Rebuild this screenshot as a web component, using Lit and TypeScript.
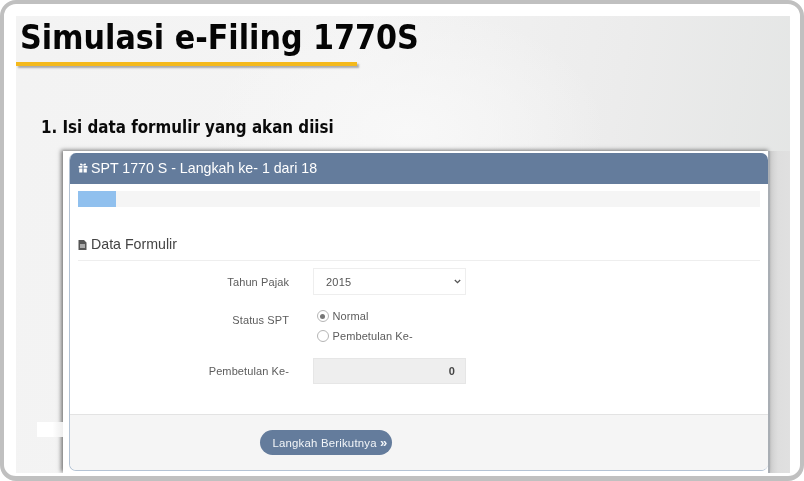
import { LitElement, html, css } from "lit";
import { customElement } from "lit/decorators.js";

@customElement("app-root")
export class AppRoot extends LitElement {
  static styles = css`
    :host { display: block; width: 804px; height: 481px; background: #fff; overflow: hidden; font-family: "Liberation Sans", Arial, sans-serif; }
    * { box-sizing: border-box; }
    .frame { height: 481px; width: 804px; border: 4px solid #c0c0c0; border-bottom-width: 5px; border-radius: 16px; padding: 12px 10px 3px 12px; background: #fff; }
    .slide { position: relative; height: 457px; overflow: hidden;
      background:
        radial-gradient(ellipse 200px 125px at 390px 115px, #f8f8f8 0%, rgba(248,248,248,0) 100%),
        linear-gradient(100deg, #f3f3f3 0%, #f4f4f4 40%, #ececec 72%, #e2e4e3 100%); }
    h1 { margin: 0; padding: 2px 0 0 4px; height: 46px; font: 700 33.6px/40px "DejaVu Sans", sans-serif; font-stretch: condensed; color: #050505; white-space: nowrap; filter: blur(.3px); }
    .rule { width: 341px; height: 4px; background: #f4b91c; box-shadow: 2px 2px 2px rgba(0,0,0,.3); }
    h2 { margin: 50px 0 0 25px; font: 700 16.8px/22px "DejaVu Sans", sans-serif; font-stretch: condensed; color: #0a0a0a; height: 22px; filter: blur(.3px); }
    .stage { margin: 13px 0 0 47px; height: 322px; display: flex; }
    .window { flex: none; width: 707px; height: 322px; padding: 2px 0 0 6px; background: #fff; border-right: 2px solid #a9aeb4; position: relative; box-shadow: -2px -1px 4px rgba(0,0,0,.5); }
    .band { flex: 1; background: linear-gradient(90deg, #cfcfcf, #dedede 40%, #e0e0e0); }
    .panel { width: 699px; height: 318px; background: #fff; border: 1px solid #b4c3d4; border-top: 0; border-right: 0; border-radius: 7px; overflow: hidden; display: flex; flex-direction: column; filter: blur(.3px); }
    .head { height: 31px; background: #647c9c; color: #fff; font-size: 14.2px; display: flex; align-items: center; gap: 3px; padding: 0 0 2px 8px; flex: none; }
    .body { flex: 1; padding: 7px 8px 0 8px; }
    .track { height: 16px; width: 682px; background: #f5f5f5; }
    .fill { height: 100%; width: 38px; background: #90c0ee; }
    .section { margin-top: 28px; height: 26px; padding-top: 1px; border-bottom: 1px solid #eee; color: #444; font-size: 14.2px; display: flex; align-items: flex-start; gap: 4px; line-height: 16px; }
    .section svg { margin-top: 4px; }
    .row { display: grid; grid-template-columns: 211px 153px; column-gap: 24px; align-items: center; color: #5c5c5c; font-size: 11px; letter-spacing: .1px; }
    .row label { text-align: right; }
    .r1 { margin-top: 7px; height: 27px; }
    .r2 { margin-top: 11px; height: 40px; align-items: start; }
    .r2 label { padding-top: 8px; }
    .r3 { margin-top: 12px; height: 26px; }
    .pick { position: relative; height: 27px; }
    select { appearance: none; display: block; width: 153px; height: 27px; border: 1px solid #eee; background: #fff; color: #555; font: 11px "Liberation Sans", sans-serif; letter-spacing: .25px; padding: 0 12px; outline: none; }
    .chev { position: absolute; right: 5px; top: 11px; }
    .radios { display: flex; flex-direction: column; gap: 8px; padding: 4px 0 0 3.500px; }
    .radio { display: flex; align-items: center; gap: 4px; height: 12px; }
    .dot { width: 12px; height: 12px; border-radius: 50%; border: 1px solid #b5b5b5; background: #fff; display: flex; align-items: center; justify-content: center; }
    .dot.on::after { content: ""; width: 5px; height: 5px; border-radius: 50%; background: #777; }
    .num { height: 26px; background: #eee; border: 1px solid #e6e6e6; text-align: right; padding-right: 10px; line-height: 24px; font-weight: 700; color: #444; }
    .foot { flex: none; height: 56px; border-top: 1px solid #e3e3e3; background: #f5f5f5; padding: 15px 0 0 190px; }
    .btn { width: 132px; height: 25px; border: 0; border-radius: 13px; background: #647c9c; color: #f2f5f8; font: 11.4px "Liberation Sans", sans-serif; letter-spacing: .2px; padding: 0 0 0 8px; }
    .btn b { font-size: 13px; line-height: 10px; }
    .blob { position: absolute; left: 21px; top: 406px; width: 26px; height: 15px; background: linear-gradient(90deg, #fff 60%, #eee); }
  `;

  render() {
    return html`
      <div class="frame">
        <div class="slide">
          <h1>Simulasi e-Filing 1770S</h1>
          <div class="rule"></div>
          <h2>1. Isi data formulir yang akan diisi</h2>
          <div class="stage">
            <div class="window">
              <div class="panel">
                <div class="head">
                  <svg width="10" height="10" viewBox="0 0 10 10" fill="#fff"><path d="M.6 3h3.800v1.800H.6zM5.600 3h3.800v1.800H5.600zM1.200 5.400h3.200V9.600H1.200zM5.600 5.400h3.200V9.600H5.600zM3 .4c1 0 1.700.9 2 2 .3-1.100 1-2 2-2 .7 0 1 .5 1 1 0 .8-1 1.200-3 1.200S2 2.200 2 1.400c0-.5.3-1 1-1z"/></svg>
                  <span>SPT 1770 S - Langkah ke- 1 dari 18</span>
                </div>
                <div class="body">
                  <div class="track"><div class="fill"></div></div>
                  <div class="section">
                    <svg width="9" height="10" viewBox="0 0 9 10" fill="#555"><path d="M.5 0H6l2.500 2.500V10H.5zM2 4.500v1h5v-1zM2 6.500v1h5v-1z" fill-rule="evenodd"/></svg>
                    <span>Data Formulir</span>
                  </div>
                  <div class="row r1">
                    <label>Tahun Pajak</label>
                    <div class="pick">
                      <select><option>2015</option></select>
                      <svg class="chev" width="7" height="5" viewBox="0 0 7 5" fill="none" stroke="#555" stroke-width="1.300"><path d="M.8 1l2.700 2.700L6.200 1"/></svg>
                    </div>
                  </div>
                  <div class="row r2">
                    <label>Status SPT</label>
                    <div class="radios">
                      <div class="radio"><span class="dot on"></span>Normal</div>
                      <div class="radio"><span class="dot"></span>Pembetulan Ke-</div>
                    </div>
                  </div>
                  <div class="row r3">
                    <label>Pembetulan Ke-</label>
                    <div class="num">0</div>
                  </div>
                </div>
                <div class="foot"><button class="btn">Langkah Berikutnya <b>»</b></button></div>
              </div>
            </div>
            <div class="band"></div>
          </div>
          <div class="blob"></div>
        </div>
      </div>
    `;
  }
}
